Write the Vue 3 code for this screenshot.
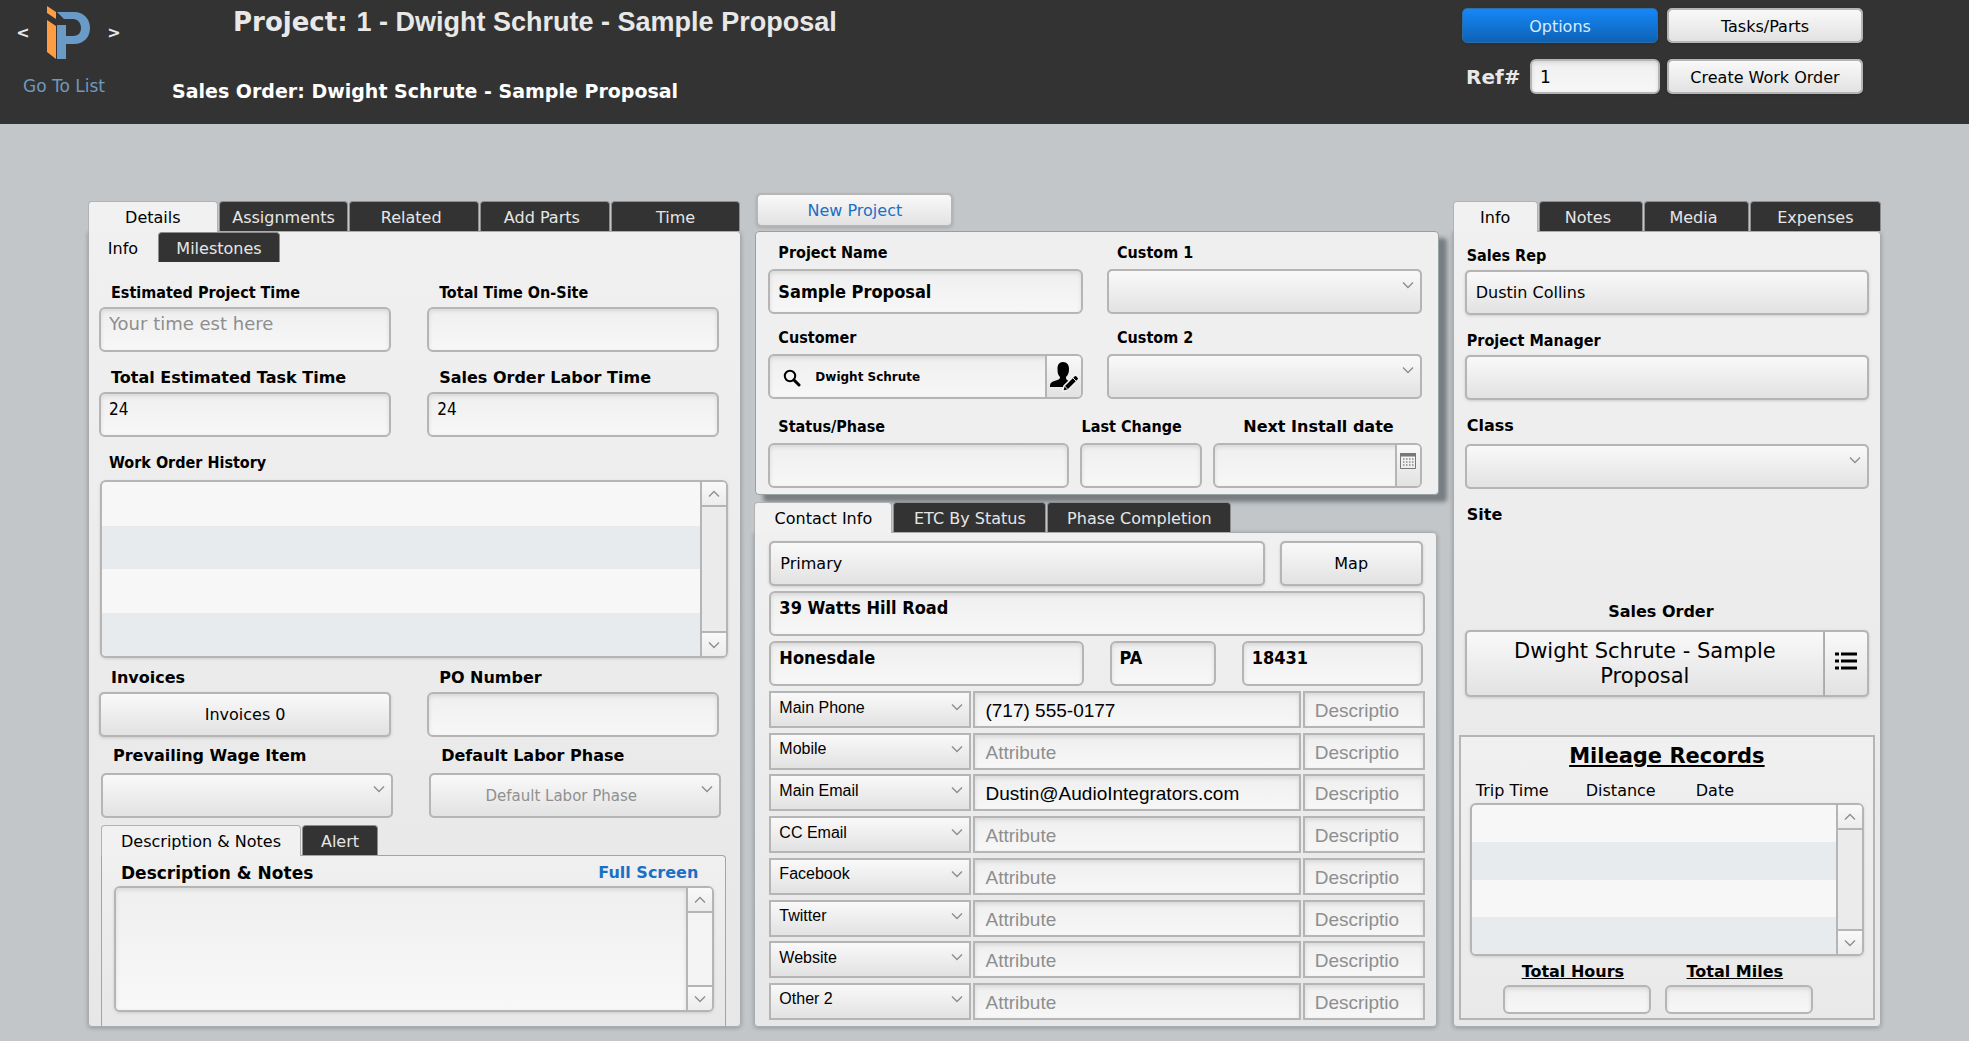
<script setup>
import { h, ref } from 'vue'

const Chevron = () =>
  h('svg', { viewBox: '0 0 12 8', width: 12, height: 8, 'aria-hidden': 'true' }, [
    h('path', { d: 'M1 1.5 6 6.5 11 1.5', fill: 'none', stroke: '#8e8e8e', 'stroke-width': 1.4 })
  ])

const detailTabs = ['Details', 'Assignments', 'Related', 'Add Parts', 'Time']
const contactTabs = ['Contact Info', 'ETC By Status', 'Phase Completion']
const infoTabs = ['Info', 'Notes', 'Media', 'Expenses']

const project = ref('Sample Proposal')
const customer = ref('Dwight Schrute')
const reference = ref('1')
const address = ref({ street: '39 Watts Hill Road', city: 'Honesdale', state: 'PA', zip: '18431' })

const contacts = ref([
  { type: 'Main Phone', value: '(717) 555-0177' },
  { type: 'Mobile', value: '' },
  { type: 'Main Email', value: 'Dustin@AudioIntegrators.com' },
  { type: 'CC Email', value: '' },
  { type: 'Facebook', value: '' },
  { type: 'Twitter', value: '' },
  { type: 'Website', value: '' },
  { type: 'Other 2', value: '' }
])
</script>

<template>
  <div class="page">
    <header class="topbar">
      <div class="brand">
        <div class="brand-nav">
          <button class="arrow" aria-label="Previous project">&lt;</button>
          <svg class="logo" viewBox="0 0 44 54" width="44" height="54" role="img" aria-label="Logo">
            <path d="M0 0 9 6V13L0 7Z" fill="#ff9d45" />
            <path d="M0 14 9 20V53L0 46Z" fill="#ff9d45" />
            <path d="M10 19H19V53H10Z" fill="#6a9bc7" />
            <path d="M10 6H27C37 6 43 13 43 22C43 32 36 38 27 38H19V30H26C31 30 34 27 34 22C34 17 31 13 26 13H17Z" fill="#6a9bc7" />
          </svg>
          <button class="arrow" aria-label="Next project">&gt;</button>
        </div>
        <a class="go-list" href="#">Go To List</a>
      </div>
      <div class="titles">
        <h1>Project: <span>1 - Dwight Schrute - Sample Proposal</span></h1>
        <h2>Sales Order: Dwight Schrute - Sample Proposal</h2>
      </div>
      <div class="actions">
        <button class="btn primary">Options</button>
        <button class="btn">Tasks/Parts</button>
        <div class="ref">
          <label for="ref">Ref#</label>
          <input id="ref" v-model="reference" class="box" />
        </div>
        <button class="btn">Create Work Order</button>
      </div>
    </header>

    <main class="columns">
      <section class="col">
        <div class="tabs even" role="tablist">
          <button v-for="(t, i) in detailTabs" :key="t" role="tab" class="tab" :class="{ active: i === 0 }">{{ t }}</button>
        </div>
        <div class="panel details">
          <div class="tabs sub" role="tablist">
            <button role="tab" class="tab active">Info</button>
            <button role="tab" class="tab">Milestones</button>
          </div>
          <div class="pairs times">
            <div class="field">
              <label class="narrow" for="est">Estimated Project Time</label>
              <input id="est" class="box raised hint" placeholder="Your time est here" />
            </div>
            <div class="field">
              <label class="narrow" for="onsite">Total Time On-Site</label>
              <input id="onsite" class="box raised" />
            </div>
            <div class="field">
              <label for="task">Total Estimated Task Time</label>
              <input id="task" class="box raised" value="24" />
            </div>
            <div class="field">
              <label for="labor">Sales Order Labor Time</label>
              <input id="labor" class="box raised" value="24" />
            </div>
          </div>
          <div class="history">
            <h3 class="narrow">Work Order History</h3>
            <div class="list">
              <table aria-label="Work Order History"><tbody><tr v-for="n in 4" :key="n"><td></td></tr></tbody></table>
              <div class="scroll">
                <button aria-label="Scroll up"><Chevron class="up" /></button>
                <button aria-label="Scroll down"><Chevron /></button>
              </div>
            </div>
          </div>
          <div class="pairs billing">
            <div class="field">
              <label for="invoices">Invoices</label>
              <button id="invoices" class="btn tall">Invoices 0</button>
            </div>
            <div class="field">
              <label for="po">PO Number</label>
              <input id="po" class="box" />
            </div>
          </div>
          <div class="pairs wages">
            <div class="field">
              <label for="wage">Prevailing Wage Item</label>
              <div class="drop"><select id="wage"><option></option></select><Chevron class="chev" /></div>
            </div>
            <div class="field">
              <label for="phase">Default Labor Phase</label>
              <div class="drop"><select id="phase" class="muted"><option>Default Labor Phase</option></select><Chevron class="chev" /></div>
            </div>
          </div>
          <div class="notes">
            <div class="tabs" role="tablist">
              <button role="tab" class="tab active">Description &amp; Notes</button>
              <button role="tab" class="tab">Alert</button>
            </div>
            <div class="notes-panel">
              <div class="notes-head">
                <label for="notes">Description &amp; Notes</label>
                <a href="#">Full Screen</a>
              </div>
              <div class="list area">
                <textarea id="notes"></textarea>
                <div class="scroll">
                  <button aria-label="Scroll up"><Chevron class="up" /></button>
                  <button aria-label="Scroll down"><Chevron /></button>
                </div>
              </div>
            </div>
          </div>
        </div>
      </section>

      <section class="col">
        <button class="btn new-project">New Project</button>
        <div class="card">
          <div class="card-grid">
            <div class="field">
              <label class="narrow" for="name">Project Name</label>
              <input id="name" v-model="project" class="box strong" />
            </div>
            <div class="field">
              <label class="narrow" for="c1">Custom 1</label>
              <div class="drop"><select id="c1"><option></option></select><Chevron class="chev" /></div>
            </div>
            <div class="field">
              <label class="narrow" for="customer">Customer</label>
              <div class="combo">
                <svg class="search" viewBox="0 0 18 18" width="18" height="18" aria-hidden="true">
                  <circle cx="7" cy="7" r="5.2" fill="none" stroke="#000" stroke-width="2" />
                  <path d="M11 11 16 16" stroke="#000" stroke-width="3" stroke-linecap="round" />
                </svg>
                <input id="customer" v-model="customer" />
                <button class="side" aria-label="Edit customer">
                  <svg viewBox="0 0 29 30" width="29" height="30">
                    <path d="M13 0C17 0 19 3 19 7C19 11 18 13 16 15C16 18 17 18.500 22 20L19 25H0C0 21 1 20 6 18.500C9 17.500 10 17 10 15C8 13 7.500 11 7.500 7C7.500 3 9 0 13 0Z" />
                    <path d="M12.500 29.500 14 24 24.500 13.500C26 12.500 29.500 15.500 28.500 17.500L18 28Z" stroke="#f3f3f3" stroke-width="1.500" />
                    <path d="M22.500 15.500 26.500 19.500M14.500 24 18 27.500" stroke="#f3f3f3" stroke-width="1" />
                  </svg>
                </button>
              </div>
            </div>
            <div class="field">
              <label class="narrow" for="c2">Custom 2</label>
              <div class="drop"><select id="c2"><option></option></select><Chevron class="chev" /></div>
            </div>
          </div>
          <div class="card-grid three">
            <div class="field">
              <label class="narrow" for="status">Status/Phase</label>
              <input id="status" class="box" />
            </div>
            <div class="field change">
              <label class="narrow" for="change">Last Change</label>
              <input id="change" class="box" />
            </div>
            <div class="field install">
              <label for="install">Next Install date</label>
              <div class="combo">
                <input id="install" />
                <button class="side cal" aria-label="Pick a date">
                  <svg viewBox="0 0 16 16" width="16" height="16">
                    <path d="M.5.5H15.500V15.500H.5Z" fill="none" stroke="#777" />
                    <path d="M0 0H16V3.500H0Z" fill="#777" />
                    <path d="M3 6H13.500M3 9H13.500M3 12H13.500" stroke="#8a8a8a" stroke-width="1.500" stroke-dasharray="1.500 1.500" />
                  </svg>
                </button>
              </div>
            </div>
          </div>
        </div>

        <div class="tabs contact-tabs" role="tablist">
          <button v-for="(t, i) in contactTabs" :key="t" role="tab" class="tab" :class="{ active: i === 0 }">{{ t }}</button>
        </div>
        <div class="panel contact">
          <div class="site-row">
            <button class="btn tall start">Primary</button>
            <button class="btn tall">Map</button>
          </div>
          <input v-model="address.street" class="box strong raised" aria-label="Street" />
          <div class="city-row">
            <input v-model="address.city" class="box strong raised" aria-label="City" />
            <input v-model="address.state" class="box strong raised" aria-label="State" />
            <input v-model="address.zip" class="box strong raised" aria-label="Zip" />
          </div>
          <div class="contact-rows">
            <div v-for="c in contacts" :key="c.type" class="contact-row">
              <div class="drop flat">
                <select :aria-label="c.type + ' type'"><option>{{ c.type }}</option></select>
                <Chevron class="chev" />
              </div>
              <input v-model="c.value" class="box flat-box" placeholder="Attribute" :aria-label="c.type" />
              <input class="box flat-box" placeholder="Descriptio" :aria-label="c.type + ' description'" />
            </div>
          </div>
        </div>
      </section>

      <section class="col">
        <div class="tabs info-tabs" role="tablist">
          <button v-for="(t, i) in infoTabs" :key="t" role="tab" class="tab" :class="{ active: i === 0 }">{{ t }}</button>
        </div>
        <div class="panel info">
          <div class="people">
            <div class="field">
              <label class="narrow" for="rep">Sales Rep</label>
              <button id="rep" class="btn tall start">Dustin Collins</button>
            </div>
            <div class="field">
              <label class="narrow" for="manager">Project Manager</label>
              <button id="manager" class="btn tall"></button>
            </div>
            <div class="field class">
              <label for="class">Class</label>
              <div class="drop"><select id="class"><option></option></select><Chevron class="chev" /></div>
            </div>
            <h3>Site</h3>
          </div>
          <div class="order">
            <h3>Sales Order</h3>
            <div class="split">
              <button class="btn">Dwight Schrute - Sample Proposal</button>
              <button class="btn" aria-label="List sales orders">
                <svg viewBox="0 0 22 18" width="22" height="18">
                  <path d="M0 2H4M0 9H4M0 16H4M6 2H22M6 9H22M6 16H22" stroke="#000" stroke-width="3" />
                </svg>
              </button>
            </div>
          </div>
          <div class="mileage">
            <h2>Mileage Records</h2>
            <div class="heads"><span>Trip Time</span><span>Distance</span><span>Date</span></div>
            <div class="list">
              <table aria-label="Mileage Records"><tbody><tr v-for="n in 4" :key="n"><td></td></tr></tbody></table>
              <div class="scroll">
                <button aria-label="Scroll up"><Chevron class="up" /></button>
                <button aria-label="Scroll down"><Chevron /></button>
              </div>
            </div>
            <div class="totals">
              <div><label for="hours">Total Hours</label><input id="hours" class="box" /></div>
              <div><label for="miles">Total Miles</label><input id="miles" class="box" /></div>
            </div>
          </div>
        </div>
      </section>
    </main>
  </div>
</template>

<style>
body {
  margin: 0;
  background: #c2c6c9;
}
</style>

<style scoped>
.page {
  display: flex;
  flex-direction: column;
  box-sizing: border-box;
  min-height: 100vh;
  background: #c2c6c9;
  color: #000;
  font: 16px/20px "DejaVu Sans", sans-serif;
}
.page *, .page *::before {
  box-sizing: border-box;
}
button, input, select, textarea {
  margin: 0;
  min-width: 0;
  color: inherit;
  font: inherit;
}
button {
  cursor: pointer;
}
h1, h2, h3 {
  margin: 0;
}
h3 {
  font-size: 16px;
}
a {
  text-decoration: none;
}
.narrow {
  font-family: "DejaVu Sans Condensed", "DejaVu Sans", sans-serif;
}

/* header */
.topbar {
  display: flex;
  height: 124px;
  background: #333;
  color: #e8e8e8;
}
.brand {
  width: 128px;
  padding: 6px 0 0 9px;
  text-align: center;
}
.brand-nav {
  display: flex;
  align-items: center;
  justify-content: space-between;
}
.arrow {
  width: 28px;
  height: 54px;
  padding: 0;
  border: 0;
  background: none;
  font-weight: bold;
}
.logo {
  flex: none;
}
.go-list {
  display: block;
  margin-top: 16px;
  padding-right: 9px;
  color: #7298bb;
  font-size: 17px;
}
.titles {
  flex: 1;
  padding-left: 44px;
}
.titles h1 {
  margin: 6px 0 0 61px;
  font-size: 26px;
  line-height: 32px;
}
.titles h1 span {
  font-family: "Liberation Sans", sans-serif;
  font-size: 27px;
}
.titles h2 {
  margin-top: 41px;
  color: #fff;
  font-size: 19px;
  line-height: 24px;
}
.actions {
  display: grid;
  grid-template-columns: 196px 196px;
  grid-auto-rows: 35px;
  gap: 16px 9px;
  padding: 8px 106px 0 0;
}
.actions .btn {
  padding-top: 2px;
}
.ref {
  display: flex;
  align-items: center;
  justify-content: space-between;
  margin-right: -2px;
  padding-left: 4px;
}
.ref label {
  font-size: 20px;
  font-weight: bold;
}
.ref .box {
  width: 130px;
  height: 35px;
  font-size: 17px;
}

/* controls */
.btn, .drop select {
  border: 2px solid #b5b5b5;
  border-radius: 5px;
  background: linear-gradient(#f9f9f9, #e2e2e2) padding-box #b5b5b5;
  color: #000;
}
.btn {
  padding: 0 9px;
  box-shadow: 0 1px 3px rgba(0, 0, 0, 0.15);
}
.btn.primary {
  border: 1px solid #2c6ea8;
  background: linear-gradient(#1687f8, #0e62b4);
  color: #d6ecff;
}
.tall {
  height: 45px;
}
.start {
  text-align: left;
}
.box, .combo {
  width: 100%;
  height: 45px;
  padding: 0 8px;
  border: 2px solid #b5b5b5;
  border-radius: 6px;
  outline: 0;
  background: linear-gradient(#efefef, #f7f7f7);
  box-shadow: inset 0 2px 4px rgba(0, 0, 0, 0.1);
  color: #000;
}
.raised {
  padding-bottom: 12px;
  font-family: "DejaVu Sans Condensed", "DejaVu Sans", sans-serif;
  font-size: 17px;
}
.hint {
  font-family: "DejaVu Sans", sans-serif;
  font-size: 18px;
}
.strong {
  font-family: "DejaVu Sans Condensed", "DejaVu Sans", sans-serif;
  font-size: 18px;
  font-weight: bold;
}
.box::placeholder {
  color: #8e8e8e;
  opacity: 1;
}
.drop {
  position: relative;
  height: 45px;
}
.drop select {
  width: 100%;
  height: 100%;
  padding: 0 8px;
  appearance: none;
}
.drop .muted {
  padding-right: 36px;
  color: #909090;
  font-size: 15px;
  text-align-last: center;
}
.chev {
  position: absolute;
  top: 12px;
  right: 8px;
  pointer-events: none;
}
.up {
  transform: rotate(180deg);
}
.combo {
  display: flex;
  align-items: center;
  padding: 0;
}
.combo input {
  flex: 1;
  border: 0;
  outline: 0;
  background: none;
  font-size: 12px;
  font-weight: bold;
}
.search {
  flex: none;
  margin: 3px 12px 0 13px;
}
.side {
  display: flex;
  flex: none;
  align-items: center;
  justify-content: center;
  width: 36px;
  height: 100%;
  padding: 0;
  border: 0;
  border-left: 2px solid #b5b5b5;
  border-radius: 0 4px 4px 0;
  background: linear-gradient(#f9f9f9, #e2e2e2);
}
.cal {
  align-items: flex-start;
  width: 25px;
  padding-top: 8px;
}
.field {
  display: flex;
  flex-direction: column;
  gap: 4px;
}
.field label {
  padding-left: 12px;
  font-weight: bold;
}

/* columns, tabs and panels */
.columns {
  display: grid;
  flex: 1;
  grid-template-columns: minmax(0, 653fr) minmax(0, 683fr) minmax(0, 428fr);
  gap: 14px;
  padding: 69px 88px 14px;
}
.col {
  display: flex;
  flex-direction: column;
  padding-top: 8px;
}
.tabs {
  display: flex;
  gap: 1px;
}
.tab {
  position: relative;
  height: 30px;
  padding: 2px 0 0;
  border: 1px solid #8d8d8d;
  border-bottom: 0;
  border-radius: 4px 4px 0 0;
  background: #333;
  color: #e6e6e6;
}
.tab.active {
  z-index: 1;
  height: 31px;
  margin-bottom: -1px;
  border-color: #b2b2b2;
  background: #f1f1f1;
  color: #000;
}
.even .tab {
  flex: 1;
}
.even .tab:nth-child(3), .even .tab:nth-child(4),
.info-tabs .tab:nth-child(2), .info-tabs .tab:nth-child(3) {
  text-indent: -6px;
}
.even {
  padding-right: 1px;
}
.panel {
  display: flex;
  flex: 1;
  flex-direction: column;
  border: 1px solid #a9adb0;
  border-radius: 0 4px 4px 4px;
  background: linear-gradient(#f0f0f0, #e7e7e7);
  box-shadow: 0 1px 4px rgba(0, 0, 0, 0.25);
}

/* details */
.sub .tab {
  width: 122px;
}
.sub .tab.active {
  width: 68px;
  border-color: transparent;
  background: none;
}
.pairs {
  display: grid;
  grid-template-columns: 1fr 1fr;
  gap: 16px 36px;
  padding: 0 21px 0 10px;
}
.times {
  padding-top: 21px;
}
.history {
  padding: 16px 12px 0 11px;
}
.history h3 {
  padding: 0 0 7px 9px;
}
.list {
  display: flex;
  overflow: hidden;
  border: 2px solid #b5b5b5;
  border-radius: 6px;
  background: #f7f7f7;
  box-shadow: 0 1px 3px rgba(0, 0, 0, 0.12);
}
.list table {
  flex: 1;
  height: 174px;
  border-collapse: collapse;
}
.list td {
  padding: 0;
}
.list tr:nth-child(even) {
  background: #e8ebee;
}
.scroll {
  display: flex;
  flex: none;
  flex-direction: column;
  justify-content: space-between;
  width: 26px;
  border-left: 2px solid #b5b5b5;
  background: #ebebeb;
}
.scroll button {
  height: 25px;
  padding: 0;
  border: 0;
  border-bottom: 2px solid #b5b5b5;
  background: linear-gradient(#f9f9f9, #ececec);
  line-height: 0;
}
.scroll button:last-child {
  border-top: 2px solid #b5b5b5;
  border-bottom: 0;
}
.billing {
  padding-top: 10px;
}
.billing .field {
  gap: 4px;
}
.wages {
  padding: 9px 19px 0 12px;
}
.wages .field {
  gap: 7px;
}
.notes {
  display: flex;
  flex: 1;
  flex-direction: column;
  margin: 7px 14px 0 12px;
}
.notes .tab {
  width: 76px;
}
.notes .tab.active {
  width: 200px;
}
.notes-panel {
  display: flex;
  flex: 1;
  flex-direction: column;
  padding: 7px 11px 14px 12px;
  border: 1px solid #a4a4a4;
  border-bottom: 0;
  border-radius: 0 4px 0 0;
  background: linear-gradient(#f0f0f0, #e7e7e7);
}
.notes-head {
  display: flex;
  justify-content: space-between;
  padding: 0 16px 3px 7px;
  font-weight: bold;
}
.notes-head label {
  font-size: 17px;
}
.notes-head a {
  color: #1b6fc6;
}
.area {
  flex: 1;
  min-height: 110px;
}
.area textarea {
  flex: 1;
  padding: 8px;
  border: 0;
  outline: 0;
  resize: none;
  background: linear-gradient(#efefef, #f8f8f8);
  box-shadow: inset 0 2px 4px rgba(0, 0, 0, 0.1);
}
.area .scroll {
  background: #f4f4f4;
}

/* project card */
.new-project {
  width: 197px;
  height: 34px;
  margin: -8px 0 4px 1px;
  padding-top: 2px;
  color: #1b6fc6;
}
.card {
  padding: 11px 16px 6px 12px;
  border: 1px solid #98a0a4;
  border-radius: 4px;
  background: #efefef;
  box-shadow: 8px 7px 4px rgba(70, 78, 82, 0.6);
}
.card-grid {
  display: grid;
  grid-template-columns: 1fr 1fr;
  gap: 14px 24px;
}
.card .field {
  gap: 6px;
}
.card .field label {
  padding-left: 10px;
}
.card .three {
  grid-template-columns: minmax(0, 301fr) minmax(0, 123fr) minmax(0, 209fr);
  gap: 11px;
  margin-top: 18px;
}
.card .change label {
  padding-left: 2px;
  white-space: nowrap;
}
.card .install label {
  padding-left: 30px;
}

/* contact */
.contact-tabs {
  margin: 7px 0 0 -1px;
}
.contact-tabs .tab {
  width: 153px;
}
.contact-tabs .tab.active {
  width: 138px;
}
.contact-tabs .tab:last-child {
  width: 184px;
}
.contact {
  gap: 5px;
  margin: 0 2px 0 -1px;
  padding: 8px 11px 6px 14px;
}
.site-row {
  display: grid;
  grid-template-columns: minmax(0, 495fr) minmax(0, 143fr);
  gap: 15px;
  padding-right: 2px;
}
.city-row {
  display: grid;
  grid-template-columns: minmax(0, 314fr) minmax(0, 106fr) minmax(0, 181fr);
  gap: 26px;
  padding-right: 2px;
}
.contact-rows {
  display: flex;
  flex: 1;
  flex-direction: column;
  justify-content: space-between;
  gap: 4px;
}
.contact-row {
  display: grid;
  grid-template-columns: minmax(0, 202fr) minmax(0, 327fr) minmax(0, 122fr);
  gap: 2px;
  font-family: "Liberation Sans", sans-serif;
}
.flat {
  height: 37px;
}
.flat select {
  padding-bottom: 4px;
  border-radius: 0;
}
.flat-box {
  height: 37px;
  padding: 3px 10px 0;
  border-radius: 0;
  font-size: 19px;
}

/* info */
.info-tabs .tab {
  flex: 104 1 0;
}
.info-tabs .tab.active {
  flex-grow: 84;
}
.info-tabs .tab:last-child {
  flex-grow: 131;
}
.info {
  padding: 14px 5px 6px;
}
.people {
  display: flex;
  flex-direction: column;
  gap: 16px;
  padding: 0 6px;
}
.people .class {
  gap: 8px;
}
.people label, .people h3 {
  padding-left: 2px;
}
.order {
  margin: auto 0 38px;
  padding: 0 6px;
}
.order h3 {
  padding-right: 12px;
  text-align: center;
}
.split {
  display: flex;
  margin-top: 8px;
}
.split .btn {
  flex: 1;
  height: 67px;
  border-radius: 5px 0 0 5px;
  font-size: 21px;
  line-height: 25px;
}
.split .btn:last-child {
  flex: none;
  width: 44px;
  border-left: 0;
  border-radius: 0 5px 5px 0;
}
.mileage {
  padding: 6px 9px 4px;
  border: 2px solid #b5b5b5;
  background: linear-gradient(#f0f0f0, #e9e9e9);
}
.mileage h2 {
  font-size: 21px;
  line-height: 26px;
  text-align: center;
  text-decoration: underline;
}
.heads {
  display: flex;
  padding: 12px 0 2px 6px;
}
.heads span {
  width: 110px;
}
.mileage .list table {
  height: 149px;
}
.totals {
  display: flex;
  justify-content: center;
  gap: 14px;
  padding: 6px 18px 0 0;
}
.totals div {
  width: 148px;
  text-align: center;
}
.totals label {
  display: block;
  padding: 0 8px 3px 0;
  font-weight: bold;
  text-decoration: underline;
}
.totals .box {
  height: 29px;
}
</style>
